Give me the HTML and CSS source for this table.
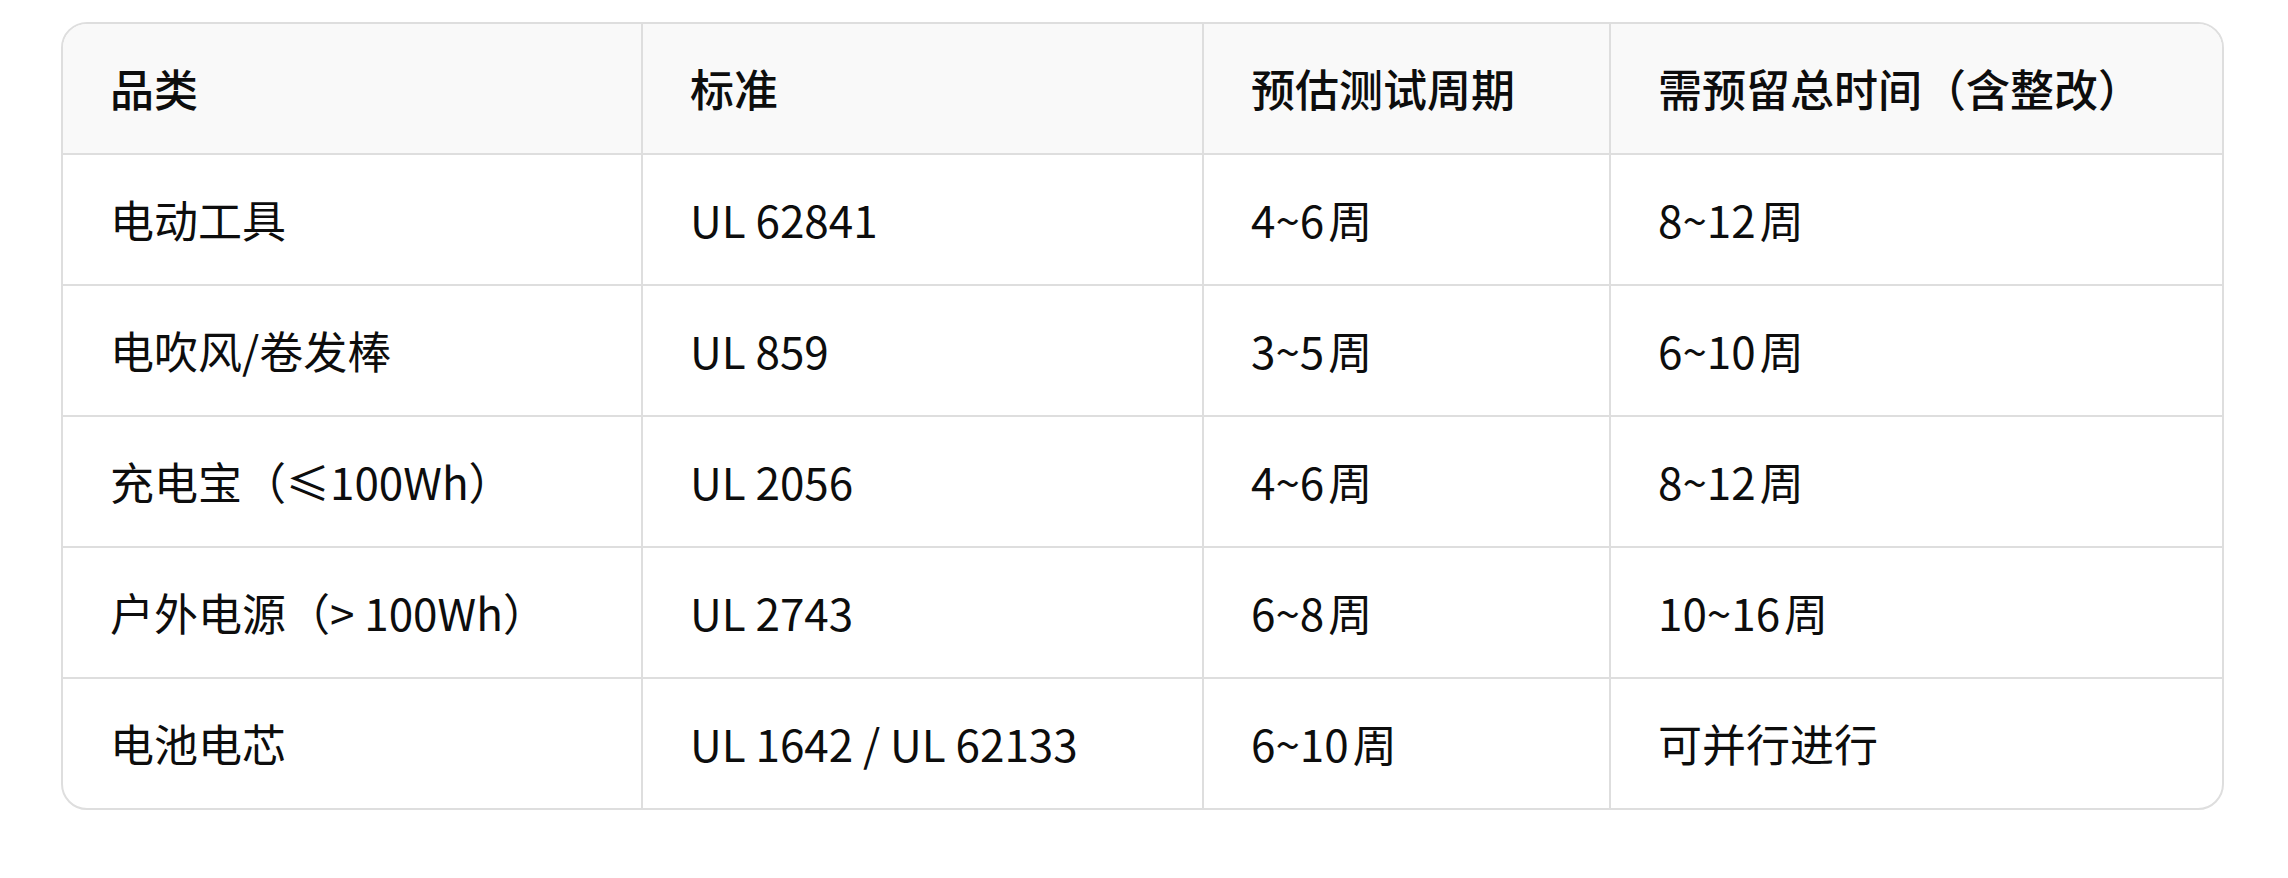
FILE: index.html
```html
<!DOCTYPE html>
<html lang="zh-CN">
<head>
<meta charset="utf-8">
<link rel="stylesheet" href="styles.css">
</head>
<body>
<div class="wrap">
  <table class="tbl">
    <colgroup>
      <col class="c1"><col class="c2"><col class="c3"><col class="c4">
    </colgroup>
    <thead>
      <tr><th>品类</th><th>标准</th><th>预估测试周期</th><th>需预留总时间（含整改）</th></tr>
    </thead>
    <tbody>
      <tr><td>电动工具</td><td>UL 62841</td><td>4~6<span class="unit">周</span></td><td>8~12<span class="unit">周</span></td></tr>
      <tr><td>电吹风/卷发棒</td><td>UL 859</td><td>3~5<span class="unit">周</span></td><td>6~10<span class="unit">周</span></td></tr>
      <tr><td>充电宝（≤100Wh）</td><td>UL 2056</td><td>4~6<span class="unit">周</span></td><td>8~12<span class="unit">周</span></td></tr>
      <tr><td>户外电源（&gt; 100Wh）</td><td>UL 2743</td><td>6~8<span class="unit">周</span></td><td>10~16<span class="unit">周</span></td></tr>
      <tr><td>电池电芯</td><td>UL 1642 / UL 62133</td><td>6~10<span class="unit">周</span></td><td>可并行进行</td></tr>
    </tbody>
  </table>
</div>
</body>
</html>
```

FILE: styles.css
```css
html, body {
  margin: 0;
  padding: 0;
  background: #ffffff;
}
body {
  font-family: "Noto Sans CJK SC", "Noto Sans", sans-serif;
  color: #0d0d0d;
}
.wrap {
  margin: 22px 0 0 61px;
  width: 2159px;
  border: 2px solid #dedede;
  border-radius: 26px;
  overflow: hidden;
}
.tbl {
  width: 100%;
  border-collapse: separate;
  border-spacing: 0;
  table-layout: fixed;
}
.c1 { width: 580px; }
.c2 { width: 561px; }
.c3 { width: 407px; }
.c4 { width: auto; }
th, td {
  height: 129px;
  box-sizing: content-box;
  padding: 0 0 0 47px;
  text-align: left;
  vertical-align: middle;
  font-size: 44px;
  line-height: 1.2;
  border-bottom: 2px solid #dedede;
  border-right: 2px solid #dedede;
  white-space: nowrap;
}
th:last-child, td:last-child { border-right: none; }
tbody tr:last-child td { border-bottom: none; }
th {
  background: #f9f9f9;
  font-weight: 500;
}
td { font-weight: 400; }
.unit { margin-left: 4px; }
```
